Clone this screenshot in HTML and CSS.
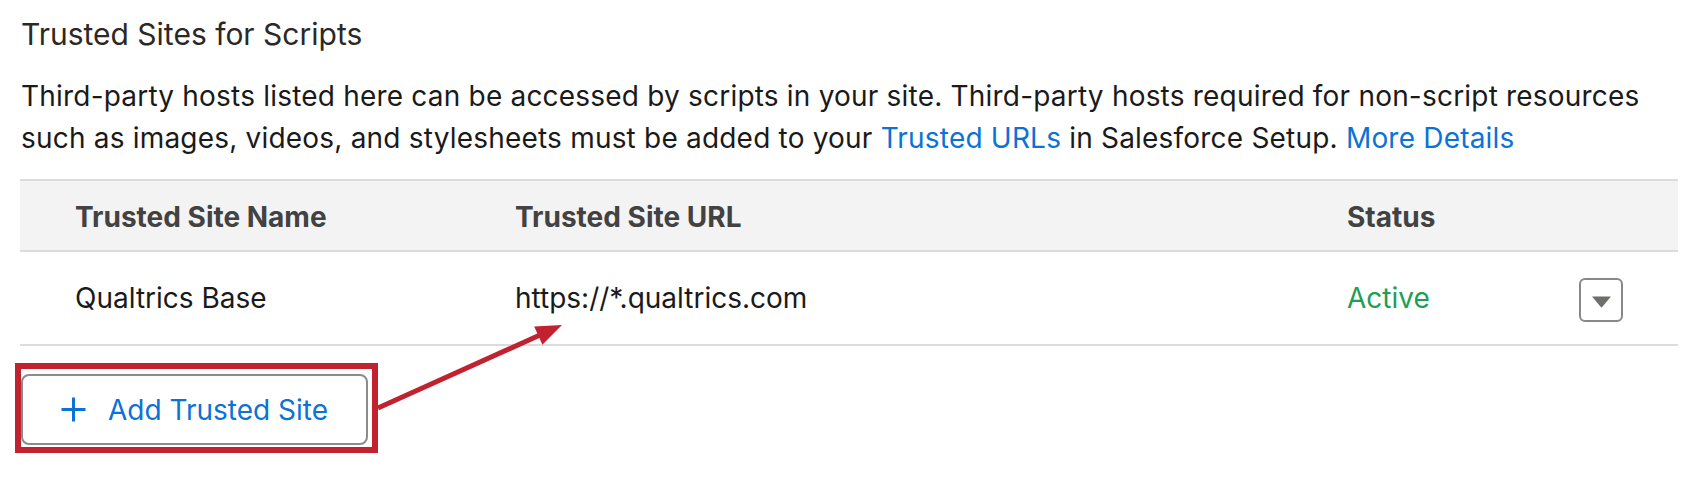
FILE: index.html
```html
<!DOCTYPE html>
<html lang="en">
<head>
<meta charset="utf-8">
<title>Trusted Sites for Scripts</title>
<link rel="stylesheet" href="styles.css">
</head>
<body>
<div class="page">
  <h2 class="title">Trusted Sites for Scripts</h2>
  <p class="desc">Third-party hosts listed here can be accessed by scripts in your site. Third-party hosts required for non-script resources<br>such as images, videos, and stylesheets must be added to your <a class="link" href="#">Trusted URLs</a> in Salesforce Setup. <a class="link" href="#">More Details</a></p>

  <div class="table">
    <div class="row head">
      <div class="cell">Trusted Site Name</div>
      <div class="cell">Trusted Site URL</div>
      <div class="cell">Status</div>
      <div class="cell"></div>
    </div>
    <div class="row data">
      <div class="cell">Qualtrics Base</div>
      <div class="cell">https://*.qualtrics.com</div>
      <div class="cell status">Active</div>
      <div class="cell">
        <button class="menu-btn" type="button" aria-label="Show actions">
          <svg class="menu-icon" viewBox="0 0 21 13" width="21" height="13"><path d="M1 1.5 H20 L11.2 12 Q10.5 12.8 9.8 12 Z" fill="#706e6b"/></svg>
        </button>
      </div>
    </div>
  </div>

  <div class="highlight">
    <button class="add-btn" type="button">
      <svg class="plus" viewBox="0 0 27 27" width="27" height="27"><path d="M13.5 1.5 V25.5 M1.5 13.5 H25.5" stroke="#0b72d6" stroke-width="3" fill="none"/></svg>
      <span>Add Trusted Site</span>
    </button>
  </div>

  <svg class="arrow" viewBox="0 0 200 100" width="200" height="100">
    <line x1="8" y1="98" x2="170" y2="25" stroke="#c1222f" stroke-width="5"/>
    <polygon points="192,15 172.4,34.8 164.2,16.6" fill="#c1222f"/>
  </svg>
</div>
</body>
</html>
```

FILE: styles.css
```css
* { box-sizing: border-box; }

html, body {
  margin: 0;
  padding: 0;
  background: #ffffff;
}

body {
  font-family: Inter, "Liberation Sans", Arial, sans-serif;
  color: #1a1a1a;
  width: 1700px;
  height: 490px;
  overflow: hidden;
}

.page {
  position: relative;
  padding: 13px 22px 0 20px;
}

.title {
  margin: 0;
  font-size: 30px;
  font-weight: 400;
  line-height: 42px;
  color: #2b2826;
  padding-left: 1px;
}

.desc {
  margin: 20px 0 0;
  font-size: 28px;
  line-height: 42px;
  letter-spacing: 0.2px;
  color: #1a1a1a;
  padding-left: 1px;
}

.link {
  color: #0b72d6;
  text-decoration: none;
}

.table {
  margin-top: 20px;
  border-top: 2px solid #dcdcdc;
}

.row {
  display: grid;
  grid-template-columns: 440px 832px 1fr 44px;
  align-items: center;
  padding: 0 55px;
  border-bottom: 2px solid #dcdcdc;
  font-size: 28px;
  line-height: 32px;
}

.row.head {
  height: 71px;
  padding-top: 3px;
  background: #f3f3f3;
  font-weight: 700;
  color: #424242;
}

.row.data {
  height: 94px;
  color: #1a1a1a;
}

.status {
  color: #1f9e55;
}

.menu-btn {
  width: 44px;
  height: 44px;
  margin-top: 4px;
  padding: 3px 0 0;
  display: flex;
  align-items: center;
  justify-content: center;
  background: #ffffff;
  border: 2px solid #8a8886;
  border-radius: 6px;
}

.menu-icon { display: block; }

.highlight {
  display: inline-block;
  margin: 17px 0 0 -5px;
  border: 6px solid #c1222f;
  padding: 5px 4px 2px 0;
}

.add-btn {
  display: flex;
  align-items: center;
  gap: 21px;
  width: 347px;
  height: 71px;
  padding: 0 0 0 37px;
  background: #ffffff;
  border: 2px solid #8c8c8c;
  border-radius: 8px;
  font-family: Inter, "Liberation Sans", Arial, sans-serif;
  font-size: 28px;
  color: #0b72d6;
}

.plus { display: block; flex: none; }

.arrow {
  position: absolute;
  left: 370px;
  top: 310px;
  overflow: visible;
}
```
